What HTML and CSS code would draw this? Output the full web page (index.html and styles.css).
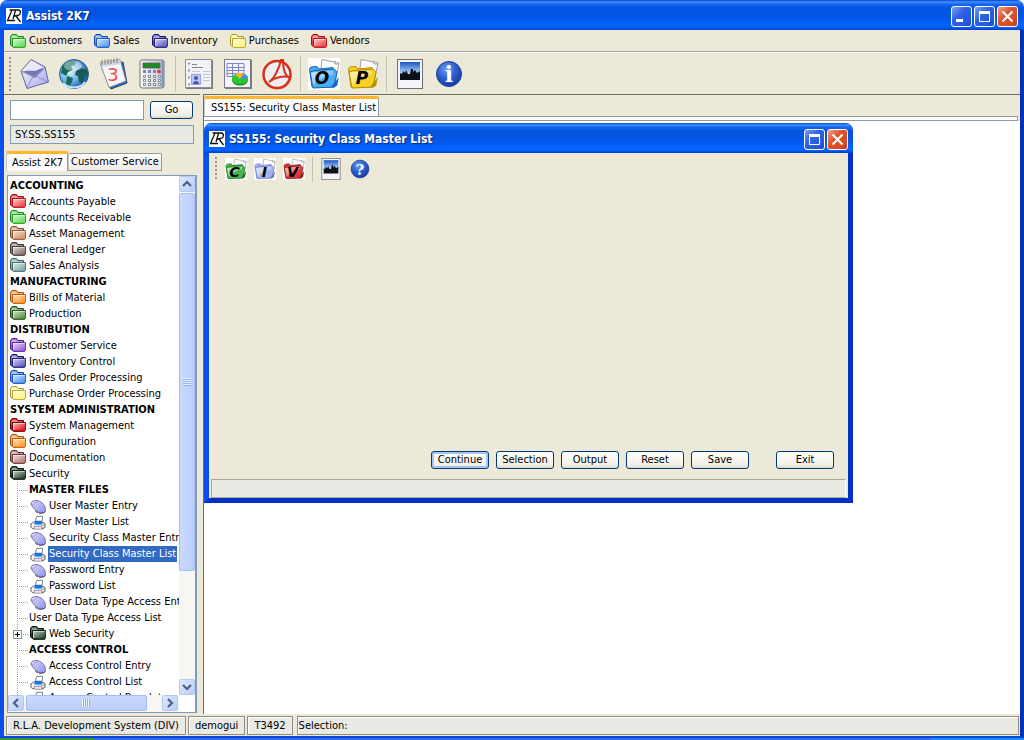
FILE: index.html
```html
<!DOCTYPE html>
<html lang="en">
<head>
<meta charset="utf-8">
<title>Assist 2K7</title>
<link rel="stylesheet" href="styles.css">
</head>
<body>
<svg class="defs" aria-hidden="true">
  <defs>
    <linearGradient id="gloss" x1="0" y1="0" x2="1" y2="1"><stop offset="0" stop-color="#fff" stop-opacity=".75"/><stop offset="1" stop-color="#fff" stop-opacity="0"/></linearGradient>
    <radialGradient id="sphere" cx=".4" cy=".3" r=".75"><stop offset="0" stop-color="#6f9df0"/><stop offset=".5" stop-color="#2b5fd0"/><stop offset="1" stop-color="#1439a0"/></radialGradient>
    <radialGradient id="globe" cx=".35" cy=".4" r=".7"><stop offset="0" stop-color="#e8f6ff"/><stop offset=".5" stop-color="#6fb4e6"/><stop offset="1" stop-color="#0d4a94"/></radialGradient>
    <linearGradient id="sky" x1="0" y1="0" x2="0" y2="1"><stop offset="0" stop-color="#1d55c8"/><stop offset=".7" stop-color="#bfe4ff"/><stop offset="1" stop-color="#fff"/></linearGradient>
    <linearGradient id="lilac" x1="0" y1="0" x2="1" y2="1"><stop offset="0" stop-color="#fff"/><stop offset="1" stop-color="#a4a6ea"/></linearGradient>
    <linearGradient id="violet" x1="0" y1="0" x2="1" y2="1"><stop offset="0" stop-color="#dcdcfc"/><stop offset="1" stop-color="#8f90e4"/></linearGradient>
    <linearGradient id="metal" x1="0" y1="0" x2="1" y2="0"><stop offset="0" stop-color="#fafafa"/><stop offset="1" stop-color="#c4c8d0"/></linearGradient>
  </defs>
  <symbol id="folder" viewBox="0 0 16 14">
    <path d="M.5 11V2.500L2 .5H6.500L8 2.500H13.500V5H2.500V12.500Z" fill="var(--f)" stroke="var(--s)"/>
    <path d="M1.500 3L2.500 1.500H6L7.500 3.500H12.500V4.500H2.500L1.500 8Z" fill="#fff" opacity=".5"/>
    <path d="M2.500 12.500V4.500H15.500V12L14.500 13.500H3.500Z" fill="var(--f)" stroke="var(--s)" stroke-width=".8"/>
    <rect x="3" y="5" width="12" height="7" fill="url(#gloss)"/>
    <path d="M3.500 12V5.500H14.500" fill="none" stroke="#fff" opacity=".5"/>
  </symbol>
  <symbol id="doc-folder" viewBox="0 0 32 32">
    <path d="M14 1.500L31 5L27 25L12 20Z" fill="#fff" stroke="#9aa0a8"/>
    <path d="M27 2.500V6L31 6" fill="#ddd" stroke="#9aa0a8"/>
    <path d="M4 29L1.500 11L3 9L9 8.500L11 11L25 9.500L26 13L27 29Z" fill="var(--f)" stroke="var(--s)"/>
    <path d="M2 14L6 12.500L26 11L29 14L26 29L5 30Z" fill="var(--f)" stroke="var(--s)"/>
    <path d="M3 14.500L25 12.500V17C16 18 10 22 5 28Z" fill="url(#gloss)"/>
    <path d="M23 29L31 19L29 28Z" fill="var(--s)"/>
  </symbol>
  <symbol id="mouse" viewBox="0 0 16 14">
    <path d="M1 3.500C3 0 8 .5 11 2.500C15 5 16.500 10 15 12.500C11 14.500 6 12 4 9C3 7 .5 6 1 3.500Z" fill="url(#violet)" stroke="#5c5a96" stroke-width=".8"/>
    <path d="M1.500 5.500C4 6 6 3 6.500 1.500" fill="none" stroke="#8886bd" stroke-width=".7"/>
    <path d="M5 11.500C8 14 12 14.500 15 12.500" fill="none" stroke="#444278"/>
  </symbol>
  <symbol id="printer" viewBox="0 0 16 16">
    <path d="M4.500 9L6.500 1.500H13L12 9Z" fill="#fff" stroke="#777a80"/>
    <path d="M.5 9.500L3 7.500H13.500L15.500 9.500V13L14 14.500H2L.5 13Z" fill="url(#metal)" stroke="#55585f"/>
    <path d="M5 6H12L12.500 10H4Z" fill="#1d78e6"/>
    <path d="M4 12.500H12L12.500 15H3.500Z" fill="#fff" stroke="#666" stroke-width=".7"/>
  </symbol>
  <symbol id="logo" viewBox="0 0 16 16">
    <rect width="16" height="16" fill="#fff"/>
    <path d="M6 2L1.500 12.500H9M3.500 2H12C15.500 2.500 15 6.500 12 7.500L8 8M9.500 2.500L7 11M10 8L14.500 14" fill="none" stroke="#111" stroke-width="1.300"/>
  </symbol>
  <symbol id="photo" viewBox="0 0 26 30">
    <rect x=".5" y=".5" width="25" height="29" fill="#f4f4fa" stroke="#6d7078"/>
    <rect x="3" y="3" width="20" height="18" fill="url(#sky)"/>
    <path d="M3 21V14L5 15L6 12L8 14L9 11L11 15H13L14 10H16V13L18 11L20 14L23 12V21Z" fill="#0c1016"/>
  </symbol>
  <symbol id="win-min" viewBox="0 0 21 21"><rect x="5" y="13" width="7" height="3" fill="#fff"/></symbol>
  <symbol id="win-max" viewBox="0 0 21 21"><path d="M5.500 6V15.500H15.500V6" fill="none" stroke="#fff"/><rect x="5" y="5" width="11" height="3" fill="#fff"/></symbol>
  <symbol id="win-close" viewBox="0 0 21 21"><path d="M5.500 5.500L15.500 15.500M15.500 5.500L5.500 15.500" stroke="#fff" stroke-width="2.200"/></symbol>
  <symbol id="chev" viewBox="0 0 10 8"><path d="M1 6L5 2L9 6" fill="none" stroke="#4d6185" stroke-width="2.200"/></symbol>
</svg>

<div class="app">
  <header class="titlebar">
    <svg class="logo"><use href="#logo"/></svg>
    <h1 class="title">Assist 2K7</h1>
    <button class="win-btn" aria-label="Minimize"><svg><use href="#win-min"/></svg></button>
    <button class="win-btn" aria-label="Maximize"><svg><use href="#win-max"/></svg></button>
    <button class="win-btn close" aria-label="Close"><svg><use href="#win-close"/></svg></button>
  </header>

  <div class="frame">
    <nav class="menubar">
      <button class="menu"><svg class="fold green"><use href="#folder"/></svg>Customers</button>
      <button class="menu"><svg class="fold blue"><use href="#folder"/></svg>Sales</button>
      <button class="menu"><svg class="fold navy"><use href="#folder"/></svg>Inventory</button>
      <button class="menu"><svg class="fold yellow"><use href="#folder"/></svg>Purchases</button>
      <button class="menu"><svg class="fold red"><use href="#folder"/></svg>Vendors</button>
    </nav>

    <div class="toolbar">
      <span class="grip"></span>
      <button class="tool" aria-label="Mail"><svg viewBox="0 0 32 32">
        <path d="M2 13L12 1.500L26 9L29.500 24L8 30.500Z" fill="url(#lilac)" stroke="#62669c"/>
        <path d="M3 13.500L26 10L16 20Z" fill="#7478b4"/>
        <path d="M5 12L12 3L24 9.500L16 13Z" fill="#e8e8fb"/>
        <path d="M3 13.500L15.500 19L26 10M8 30L14 18.500M29 24L17.500 18" fill="none" stroke="#8e91c8"/>
      </svg></button>
      <button class="tool" aria-label="Web"><svg viewBox="0 0 32 32">
        <circle cx="16" cy="16" r="14.500" fill="url(#globe)" stroke="#315c8c"/>
        <path d="M4 9C8 3 14 2 18 3L17 7L13 8L15 12L10 14L8 18L5 16L3 15Z" fill="#17695a"/>
        <path d="M9 18L15 20L14 24L11 29L8 26Z" fill="#17695a"/>
        <path d="M18 13L23 10L29 12L30 17L27 18L25 25L21 24L20 18L17 17Z" fill="#175a58"/>
        <ellipse cx="15" cy="8" rx="9" ry="5" fill="#fff" opacity=".4"/>
        <path d="M5 25C10 31 23 31 27 24" stroke="#bfeaff" stroke-width="2" fill="none"/>
      </svg></button>
      <button class="tool" aria-label="Calendar"><svg viewBox="0 0 32 32">
        <path d="M5 8L26 4L30 25L14 31Z" fill="#2b66b8" stroke="#29466e"/>
        <path d="M3 5L23 1.500L29 23L12 29.500Z" fill="#f6f6fa" stroke="#8b8e98"/>
        <path d="M3 5L23 1.500L24 6L5 9Z" fill="#d5d6da"/>
        <path d="M5 2V7M8 1.500V6.500M11 1V6M14 1V6M17 .5V5M20 .5V5" stroke="#777"/>
        <text class="glyph day" x="16" y="23">3</text>
      </svg></button>
      <button class="tool" aria-label="Calculator"><svg viewBox="0 0 32 32">
        <rect x="4" y="2" width="24" height="28" rx="2" fill="url(#metal)" stroke="#70747c"/>
        <rect x="25.500" y="3" width="2" height="26" fill="#7096cc"/>
        <rect x="7" y="5" width="17" height="5" fill="#1b8a20" stroke="#666"/>
        <path d="M7 13.500H20" stroke="#8a78c0" stroke-width="3" stroke-dasharray="3 2"/>
        <circle cx="23" cy="13.500" r="2" fill="#e04040"/>
        <path d="M7 18.500H25M7 22.500H25M7 26.500H25" stroke="#8e939c" stroke-width="3" stroke-dasharray="3 2"/>
        <path d="M8 18.500H25M8 22.500H25M8 26.500H25" stroke="#fff" stroke-width="1" stroke-dasharray="1 4"/>
      </svg></button>
      <span class="sep"></span>
      <button class="tool" aria-label="Contacts"><svg viewBox="0 0 32 32">
        <path d="M3 2H30V31H3Z" fill="#777b85"/>
        <rect x="2.500" y="1.500" width="26" height="28" fill="#f1f2f6" stroke="#8b8f99"/>
        <path d="M5 5.500H7M5 12.500H7M5 19.500H7M5 26.500H7" stroke="#999" stroke-width="2"/>
        <path d="M9 6.500H14M9 9.500H20" stroke="#888"/>
        <path d="M20 13.500H27M20 16.500H27M20 19.500H27M20 22.500H27M9 13.500H17" stroke="#c4c7d0"/>
        <rect x="8.500" y="16.500" width="9" height="10" fill="#b8c6f4" stroke="#9aa4dc"/>
        <circle cx="13" cy="20" r="2" fill="#4757b0"/><path d="M10 26C10 22 16 22 16 26Z" fill="#4757b0"/>
      </svg></button>
      <button class="tool" aria-label="Report"><svg viewBox="0 0 32 32">
        <path d="M3 2H30V31H3Z" fill="#777b85"/>
        <rect x="2.500" y="1.500" width="26" height="28" fill="#f4f4fb" stroke="#777b85"/>
        <path d="M5 5.500H22V18.500H5ZM5 9.500H22M5 12.500H22M5 15.500H22M10.500 5V18M16.500 5V18" fill="none" stroke="#8083c8"/>
        <ellipse cx="18" cy="22" rx="8" ry="5.500" fill="#158a1a"/>
        <ellipse cx="18" cy="20.500" rx="8" ry="5.500" fill="#2cc832"/>
        <path d="M18 21L13 16C15 14.500 20 14.500 22 16Z" fill="#ffb02a"/>
        <path d="M18 21L22 16C25 17 26 19 26 20Z" fill="#3c8ff0"/>
      </svg></button>
      <button class="tool" aria-label="PDF"><svg viewBox="0 0 32 32">
        <circle cx="17" cy="18" r="13.500" fill="#999" opacity=".6"/>
        <circle cx="16" cy="16.500" r="13.500" fill="#eceef0" stroke="#d8301a" stroke-width="2.500"/>
        <path d="M8 24C13 21 18 11 20 2H22C22 11 24 18 29 20C24 17 14 19 8 24Z" fill="none" stroke="#d8301a" stroke-width="2"/>
      </svg></button>
      <span class="sep"></span>
      <button class="tool" aria-label="Orders"><svg class="white sky" viewBox="0 0 32 32"><use href="#doc-folder"/><text class="glyph letter" x="14" y="26">O</text></svg></button>
      <button class="tool" aria-label="Purchasing"><svg class="gold" viewBox="0 0 32 32"><use href="#doc-folder"/><text class="glyph letter" x="15" y="26">P</text></svg></button>
      <span class="sep"></span>
      <button class="tool" aria-label="Picture"><svg class="photo"><use href="#photo"/></svg></button>
      <button class="tool" aria-label="Information"><svg viewBox="0 0 32 32">
        <circle cx="16" cy="16" r="12.500" fill="url(#sphere)" stroke="#1d3f94"/>
        <text class="glyph info" x="16" y="24">i</text>
      </svg></button>
    </div>

    <div class="main">
      <aside class="side">
        <form class="search">
          <input class="field" type="text" aria-label="Program">
          <button class="btn go" type="button">Go</button>
          <input class="field path" type="text" value="SY.SS.SS155" readonly aria-label="Current program">
        </form>
        <div class="tabs">
          <button class="tab active">Assist 2K7</button>
          <button class="tab">Customer Service</button>
        </div>
        <div class="panel">
          <div class="tree-view">
            <ul class="tree">
              <li class="head">ACCOUNTING</li>
              <li><svg class="fold red"><use href="#folder"/></svg>Accounts Payable</li>
              <li><svg class="fold green"><use href="#folder"/></svg>Accounts Receivable</li>
              <li><svg class="fold tan"><use href="#folder"/></svg>Asset Management</li>
              <li><svg class="fold taupe"><use href="#folder"/></svg>General Ledger</li>
              <li><svg class="fold teal"><use href="#folder"/></svg>Sales Analysis</li>
              <li class="head">MANUFACTURING</li>
              <li><svg class="fold orange"><use href="#folder"/></svg>Bills of Material</li>
              <li><svg class="fold moss"><use href="#folder"/></svg>Production</li>
              <li class="head">DISTRIBUTION</li>
              <li><svg class="fold purple"><use href="#folder"/></svg>Customer Service</li>
              <li><svg class="fold navy"><use href="#folder"/></svg>Inventory Control</li>
              <li><svg class="fold blue"><use href="#folder"/></svg>Sales Order Processing</li>
              <li><svg class="fold yellow"><use href="#folder"/></svg>Purchase Order Processing</li>
              <li class="head">SYSTEM ADMINISTRATION</li>
              <li><svg class="fold crimson"><use href="#folder"/></svg>System Management</li>
              <li><svg class="fold orange"><use href="#folder"/></svg>Configuration</li>
              <li><svg class="fold rose"><use href="#folder"/></svg>Documentation</li>
              <li><svg class="fold forest"><use href="#folder"/></svg>Security</li>
            </ul>
            <ul class="tree branch">
              <li class="head">MASTER FILES</li>
              <li><svg class="leaf"><use href="#mouse"/></svg>User Master Entry</li>
              <li><svg class="leaf"><use href="#printer"/></svg>User Master List</li>
              <li><svg class="leaf"><use href="#mouse"/></svg>Security Class Master Entry</li>
              <li><svg class="leaf"><use href="#printer"/></svg><span class="selected">Security Class Master List</span></li>
              <li><svg class="leaf"><use href="#mouse"/></svg>Password Entry</li>
              <li><svg class="leaf"><use href="#printer"/></svg>Password List</li>
              <li><svg class="leaf"><use href="#mouse"/></svg>User Data Type Access Entry</li>
              <li>User Data Type Access List</li>
              <li><button class="expand" aria-label="Expand Web Security"></button><svg class="fold forest"><use href="#folder"/></svg>Web Security</li>
              <li class="head">ACCESS CONTROL</li>
              <li><svg class="leaf"><use href="#mouse"/></svg>Access Control Entry</li>
              <li><svg class="leaf"><use href="#printer"/></svg>Access Control List</li>
              <li><svg class="leaf"><use href="#printer"/></svg>Access Control Populate</li>
            </ul>
          </div>
          <div class="vscroll">
            <button class="arrow" aria-label="Scroll up"><svg><use href="#chev"/></svg></button>
            <div class="track"><div class="thumb"></div></div>
            <button class="arrow down" aria-label="Scroll down"><svg><use href="#chev"/></svg></button>
          </div>
          <div class="hscroll">
            <button class="arrow left" aria-label="Scroll left"><svg><use href="#chev"/></svg></button>
            <div class="track"><div class="thumb"></div></div>
            <button class="arrow right" aria-label="Scroll right"><svg><use href="#chev"/></svg></button>
          </div>
        </div>
      </aside>

      <main class="work">
        <div class="tabs doc-tabs"><button class="tab active">SS155: Security Class Master List</button></div>
        <div class="strip"></div>
        <div class="desktop">
          <section class="window">
            <header class="titlebar">
              <svg class="logo"><use href="#logo"/></svg>
              <h2 class="title">SS155: Security Class Master List</h2>
              <button class="win-btn" aria-label="Maximize"><svg><use href="#win-max"/></svg></button>
              <button class="win-btn close" aria-label="Close"><svg><use href="#win-close"/></svg></button>
            </header>
            <div class="window-body">
              <div class="toolbar small">
                <span class="grip"></span>
                <button class="tool" aria-label="Customers"><svg class="white leafy" viewBox="0 0 32 32"><use href="#doc-folder"/><text class="glyph letter big" x="14" y="27">C</text></svg></button>
                <button class="tool" aria-label="Inventory"><svg class="white periwinkle" viewBox="0 0 32 32"><use href="#doc-folder"/><text class="glyph letter big" x="15" y="27">I</text></svg></button>
                <button class="tool" aria-label="Vendors"><svg class="white scarlet" viewBox="0 0 32 32"><use href="#doc-folder"/><text class="glyph letter big" x="14" y="27">V</text></svg></button>
                <span class="sep"></span>
                <button class="tool" aria-label="Picture"><svg><use href="#photo"/></svg></button>
                <button class="tool" aria-label="Help"><svg viewBox="0 0 32 32">
                  <circle cx="16" cy="16" r="13" fill="url(#sphere)" stroke="#1d3f94"/>
                  <text class="glyph help" x="16" y="24">?</text>
                </svg></button>
              </div>
              <div class="actions">
                <button class="btn default">Continue</button>
                <button class="btn">Selection</button>
                <button class="btn">Output</button>
                <button class="btn">Reset</button>
                <button class="btn">Save</button>
                <button class="btn exit">Exit</button>
              </div>
              <div class="window-status"></div>
            </div>
          </section>
        </div>
      </main>
    </div>

    <footer class="status">
      <span class="cell">R.L.A. Development System (DIV)</span>
      <span class="cell">demogui</span>
      <span class="cell">T3492</span>
      <span class="cell message">Selection:</span>
    </footer>
  </div>
  <div class="taskbar"><span class="start"></span><span class="tray"></span></div>
</div>
</body>
</html>
```
FILE: styles.css
```css
* { box-sizing: border-box; }
body {
  margin: 0;
  background: #fff;
  color: #000;
  font: 11px/16px "DejaVu Sans Condensed", "DejaVu Sans", sans-serif;
}
button, input { font: inherit; color: inherit; margin: 0; }
button { padding: 0; border: 0; background: none; }
ul { margin: 0; padding: 0; list-style: none; }
svg { display: block; flex: none; }
.defs { position: absolute; width: 0; height: 0; }

.app { display: flex; flex-direction: column; height: 100vh; }

/* Title bars */
.titlebar {
  display: flex;
  align-items: center;
  flex: none;
  height: 30px;
  gap: 2px;
  padding: 2px 6px 0;
  border-radius: 7px 7px 0 0;
  background: linear-gradient(#0a3fd0 0, #3f94ff 2px, #1a66f0 4px, #0353e0 8px, #0455e4 16px, #0262fb 24px, #0364ff 27px, #0040cc 30px);
}
.logo { width: 16px; height: 16px; }
.title {
  flex: 1;
  margin: 0 0 0 2px;
  color: #fff;
  font: bold 12px/16px "DejaVu Sans Condensed", "DejaVu Sans", sans-serif;
  text-shadow: 1px 1px 1px #0a2a80;
  white-space: nowrap;
}
.win-btn {
  width: 21px;
  height: 21px;
  border: 1px solid #fff;
  border-radius: 3px;
  background: linear-gradient(135deg, #7ba2f0 0, #2f63e4 40%, #2458de 80%, #1a48c0 100%);
}
.win-btn svg { width: 21px; height: 21px; margin: -1px; }
.close { background: linear-gradient(135deg, #f0a08a 0, #e0532c 40%, #d84a20 80%, #b03410 100%); }

.frame {
  display: flex;
  flex-direction: column;
  flex: 1;
  min-height: 0;
  border: solid #0a46e0;
  border-width: 0 4px 2px;
  border-left-color: #0a4fee;
  border-right-color: #0230b8;
  background: #ece9d8;
}

/* Menu and toolbars */
.menubar {
  display: flex;
  flex: none;
  gap: 12px;
  height: 22px;
  padding: 0 6px;
  border-bottom: 1px solid #aca899;
}
.menu { display: flex; align-items: center; gap: 3px; }
.toolbar {
  display: flex;
  align-items: center;
  flex: none;
  height: 42px;
  border-top: 1px solid #fff;
}
.grip {
  width: 2px;
  height: 34px;
  margin: 0 4px 0 5px;
  background: repeating-linear-gradient(#9a978a 0 2px, transparent 2px 4px);
}
.tool { width: 39px; height: 36px; display: grid; place-items: center; }
.tool svg { width: 32px; height: 32px; }
.tool .photo { width: 26px; height: 30px; }
.sep { width: 8px; height: 36px; background: linear-gradient(90deg, transparent 4px, #c5c2b2 4px 5px, transparent 5px); }
.white { background: #fff; }
.glyph { font-family: "DejaVu Serif", serif; font-weight: bold; text-anchor: middle; }
.day { font: 18px "DejaVu Sans", sans-serif; fill: #f04a4a; }
.letter { font-size: 17px; font-style: italic; font-family: "DejaVu Sans", sans-serif; }
.big { font-size: 21px; }
.info { font-size: 22px; fill: #fff; }
.help { font-size: 22px; fill: #fff; }
.small { height: 32px; border: 0; }
.small .grip { height: 24px; margin: 0 4px; }
.small .tool { width: 29px; height: 24px; }
.small .tool svg { width: 22px; height: 22px; }
.small .sep { height: 26px; }

/* Folder colours */
.fold { width: 16px; height: 14px; }
.leaf { width: 16px; height: 15px; }
.green { --f: #5edb52; --s: #1e8a1c; }
.blue { --f: #4c94f4; --s: #1448b4; }
.navy { --f: #5652bc; --s: #1c1868; }
.yellow { --f: #fff27a; --s: #a89a28; }
.red { --f: #f0383c; --s: #a80c10; }
.tan { --f: #d09060; --s: #80502c; }
.taupe { --f: #7c6a64; --s: #443632; }
.teal { --f: #7ea4a4; --s: #3c6264; }
.orange { --f: #ff9420; --s: #b4500c; }
.moss { --f: #4f8a3a; --s: #28501e; }
.purple { --f: #9458e0; --s: #542090; }
.crimson { --f: #e00c10; --s: #5c0408; }
.rose { --f: #b87a78; --s: #602830; }
.forest { --f: #1c3c24; --s: #0a1c0e; }
.sky { --f: #4aaef4; --s: #1a64b4; }
.gold { --f: #f8d020; --s: #b88c08; }
.leafy { --f: #46b84a; --s: #1a7424; }
.periwinkle { --f: #a4b4ec; --s: #6a7cc8; }
.scarlet { --f: #dc3838; --s: #901818; }

/* Columns */
.main { display: flex; flex: 1; min-height: 0; gap: 3px; }
.side {
  display: flex;
  flex-direction: column;
  flex: none;
  width: 196px;
  border-top: 1px solid #6f6c60;
  padding: 5px 3px 1px 2px;
}
.search { display: grid; grid-template-columns: 134px 43px; gap: 5px 6px; align-items: center; padding: 0 0 0 4px; }
.field { width: 100%; height: 20px; padding: 0 4px; border: 1px solid #7f9db9; background: #fff; }
.path { grid-column: 1 / 3; width: 184px; height: 19px; background: #eaeae4; }
.btn {
  height: 18px;
  border: 1px solid #003c74;
  border-radius: 3px;
  background: linear-gradient(#fff, #f2f0e8 80%, #dcd6ca);
  line-height: 16px;
}
.default { box-shadow: inset 0 0 0 2px #a8c4f2; }

.tabs { display: flex; align-items: flex-end; flex: none; height: 20px; margin-top: 7px; }
.tab {
  height: 18px;
  padding: 0 2px;
  border: 1px solid #919b9c;
  border-left-color: #c6c8c4;
  border-radius: 2px 2px 0 0;
  background: linear-gradient(#fff, #ecebe6);
  white-space: nowrap;
}
.tab.active {
  height: 20px;
  padding: 0 4px 0 5px;
  border-top: 3px solid #ffb62c;
  border-bottom: 0;
  background: #fcfcfe;
  line-height: 14px;
}
.panel {
  display: grid;
  grid-template-columns: minmax(0, 1fr) 16px;
  grid-template-rows: minmax(0, 1fr) 17px;
  flex: 1;
  min-height: 0;
  margin: 4px 0 0 1px;
  border: 1px solid #7f9db9;
  border-right-width: 2px;
  background: #fff;
}

/* Tree */
.tree-view { overflow: hidden; padding: 2px 0 0 2px; }
.tree li { display: flex; align-items: center; gap: 3px; height: 16px; white-space: nowrap; }
.tree .fold { align-self: flex-start; }
.head { font-weight: bold; }
.branch { margin-left: 7px; background: repeating-linear-gradient(#a0a0a0 0 1px, transparent 1px 2px) 0 0 / 1px 100% no-repeat; }
.branch li::before {
  content: "";
  flex: none;
  width: 12px;
  height: 1px;
  margin-right: -3px;
  background: repeating-linear-gradient(90deg, #a0a0a0 0 1px, transparent 1px 2px);
}
.branch li { position: relative; }
.branch svg { margin-left: 1px; }
.selected { padding: 0 1px; margin-left: -1px; background: #316ac5; color: #fff; }
.expand { position: absolute; left: -4px; top: 4px; width: 9px; height: 9px; border: 1px solid #8494a8; background: linear-gradient(#000, #000) center / 5px 1px no-repeat, linear-gradient(#000, #000) center / 1px 5px no-repeat, #fff; }

/* Scroll bars */
.vscroll { display: flex; flex-direction: column; gap: 1px; background: #f6f6f2; }
.hscroll { display: flex; gap: 2px; background: #f6f6f2; padding-right: 1px; }
.arrow {
  display: grid;
  place-items: center;
  flex: none;
  width: 16px;
  height: 16px;
  border: 1px solid #b4c8f6;
  border-radius: 2px;
  background: linear-gradient(135deg, #e0e9fe, #b9cdfa);
}
.arrow svg { width: 10px; height: 8px; }
.down svg { transform: rotate(180deg); }
.left svg { transform: rotate(-90deg); }
.right svg { transform: rotate(90deg); }
.track { flex: 1; }
.thumb {
  display: grid;
  place-items: center;
  border: 1px solid #a8bef0;
  border-radius: 2px;
  background: linear-gradient(90deg, #cbd9fd, #bacdfb);
}
.thumb::before { content: ""; width: 8px; height: 8px; background: repeating-linear-gradient(#eef4fe 0 1px, #8cb0f8 1px 2px); }
.vscroll .thumb { height: 78%; }
.hscroll .thumb { width: 90%; height: 16px; background: linear-gradient(#cbd9fd, #bacdfb); }
.hscroll .thumb::before { background: repeating-linear-gradient(90deg, #eef4fe 0 1px, #8cb0f8 1px 2px); }

/* Work area */
.work {
  display: flex;
  flex-direction: column;
  flex: 1;
  min-width: 0;
  border-top: 1px solid #6f6c60;
  border-left: 1px solid #6f6c60;
}
.doc-tabs { margin-top: 1px; }
.doc-tabs .tab.active { padding: 0 2px 0 6px; }
.strip { flex: none; height: 5px; margin-right: 2px; border: 1px solid #919b9c; background: #fcfcfe; border-left: 0; }
.desktop { position: relative; flex: 1; background: #fff; }
.window {
  position: absolute;
  left: 0;
  top: 2px;
  display: flex;
  flex-direction: column;
  width: 649px;
  height: 380px;
}
.window .titlebar { padding-right: 5px; padding-left: 5px; }
.window-body {
  display: flex;
  flex-direction: column;
  flex: 1;
  border: solid #0a46e0;
  border-width: 0 5px 5px;
  border-color: #0231c4;
  border-left-color: #0a4fee;
  padding: 0 2px;
  background: #ece9d8;
}
.actions { display: flex; gap: 7px; margin-top: auto; padding: 0 12px 10px; justify-content: flex-end; }
.actions .btn { width: 58px; }
.actions .exit { margin-left: 20px; }
.window-status { height: 19px; border: 1px solid #aca899; border-right-color: #fff; background: #eaeae4; }

/* Status bar */
.status { display: flex; flex: none; gap: 2px; height: 22px; padding: 2px 1px 1px 2px; }
.cell { padding: 0 6px; border: 1px solid #8f8d84; box-shadow: inset 1px 1px 0 #fff; background: #eaeae4; line-height: 18px; white-space: nowrap; }
.message { flex: 1; padding: 0 1px; margin-left: 2px; }

.taskbar { display: flex; justify-content: space-between; flex: none; height: 2px; background: #2f6fe0; }
.start { width: 94px; background: #3a9438; }
.tray { width: 93px; background: #1590e8; }
```
